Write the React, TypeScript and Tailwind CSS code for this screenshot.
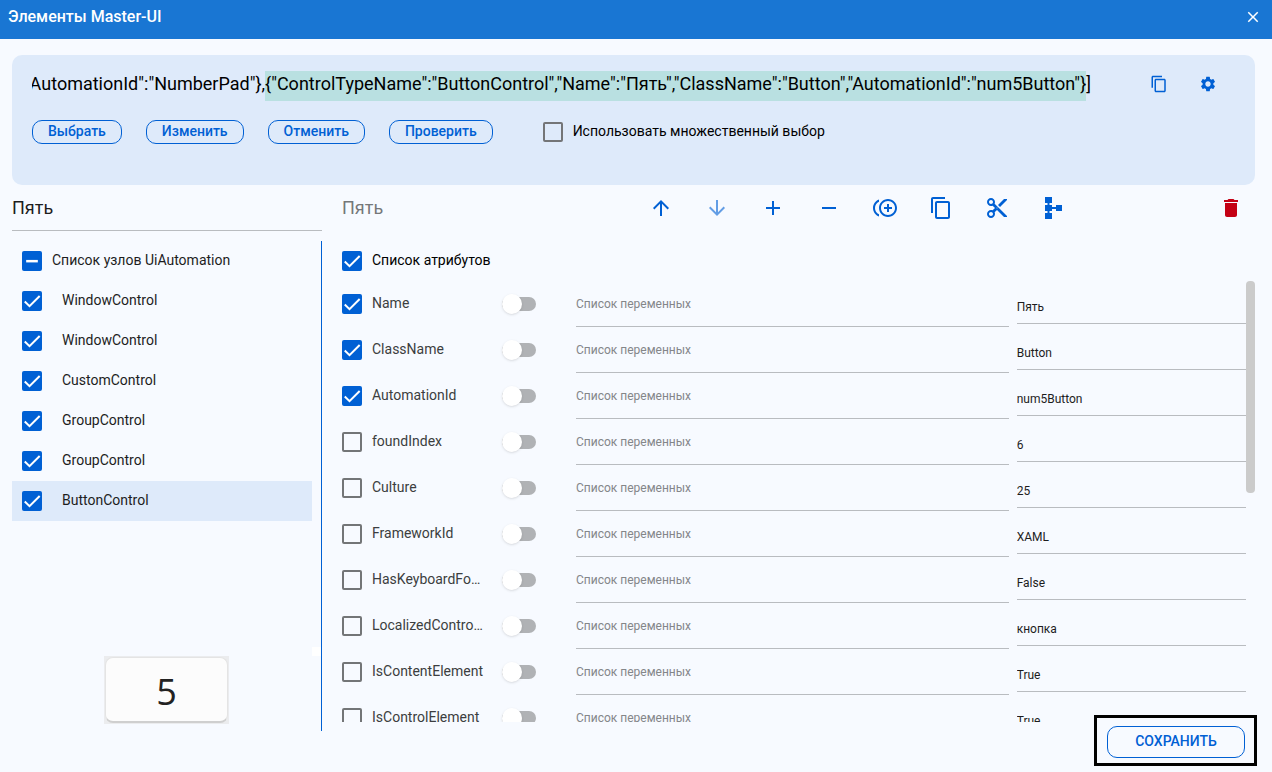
import { useState } from 'react';
import clsx from 'clsx';
import {
  MdAdd,
  MdArrowDownward,
  MdArrowUpward,
  MdClose,
  MdContentCopy,
  MdContentCut,
  MdControlPointDuplicate,
  MdDelete,
  MdRemove,
  MdSettings,
} from 'react-icons/md';

const nodes = [
  'WindowControl',
  'WindowControl',
  'CustomControl',
  'GroupControl',
  'GroupControl',
  'ButtonControl',
];

const attributes = [
  { name: 'Name', value: 'Пять', used: true },
  { name: 'ClassName', value: 'Button', used: true },
  { name: 'AutomationId', value: 'num5Button', used: true },
  { name: 'foundIndex', value: '6', used: false },
  { name: 'Culture', value: '25', used: false },
  { name: 'FrameworkId', value: 'XAML', used: false },
  { name: 'HasKeyboardFocus', value: 'False', used: false },
  { name: 'LocalizedControlType', value: 'кнопка', used: false },
  { name: 'IsContentElement', value: 'True', used: false },
  { name: 'IsControlElement', value: 'True', used: false },
];

const actions = ['Выбрать', 'Изменить', 'Отменить', 'Проверить'];

function TreeIcon() {
  return (
    <svg viewBox="0 0 24 24" className="size-6" fill="currentColor">
      <path d="M4 1h7v6H8.500v2H11v2h4V9h6v6h-6v-2h-4v2H8.500v2H11v6H4v-6h2.500v-2H4V9h2.500V7H4z" />
    </svg>
  );
}

const tools = [
  { label: 'Вверх', icon: <MdArrowUpward /> },
  { label: 'Вниз', icon: <MdArrowDownward />, disabled: true },
  { label: 'Добавить', icon: <MdAdd /> },
  { label: 'Убрать', icon: <MdRemove /> },
  { label: 'Дублировать', icon: <MdControlPointDuplicate /> },
  { label: 'Копировать', icon: <MdContentCopy /> },
  { label: 'Вырезать', icon: <MdContentCut /> },
  { label: 'Дерево', icon: <TreeIcon /> },
];

type CheckboxProps = {
  id: string;
  defaultChecked?: boolean;
  mixed?: boolean;
};

function Checkbox({ id, defaultChecked = false, mixed = false }: CheckboxProps) {
  const [checked, setChecked] = useState(defaultChecked);
  const filled = checked || mixed;

  return (
    <span className="grid size-5 shrink-0">
      <input
        id={id}
        type="checkbox"
        checked={checked}
        onChange={(e) => setChecked(e.target.checked)}
        className={clsx(
          'col-start-1 row-start-1 size-5 appearance-none rounded-xs',
          filled ? 'bg-[#0060d4]' : 'border-2 border-[#737577]',
        )}
      />
      {filled && (
        <svg
          viewBox="0 0 24 24"
          className="pointer-events-none col-start-1 row-start-1 size-5 fill-none stroke-white"
          strokeWidth={mixed ? 3 : 2.4}
        >
          <path d={mixed ? 'M5 12.200h14' : 'M3.300 12.700 9 18.200 21.200 6'} />
        </svg>
      )}
    </span>
  );
}

export default function App() {
  return (
    <div className="flex h-screen flex-col bg-[#f7faff] font-[Roboto,sans-serif] text-sm text-[#1d1d1d]">
      <header className="flex h-[39px] shrink-0 items-center justify-between bg-[#1976d3] pr-2 pb-[6px] pl-2 text-white">
        <h1 className="text-base font-medium">Элементы Master-UI</h1>
        <button type="button" aria-label="Закрыть" className="p-[2px] text-lg">
          <MdClose />
        </button>
      </header>

      <main className="flex min-h-0 flex-1 flex-col pt-4 pr-[17px] pl-3">
        <section className="rounded-[10px] bg-[#deeafa] px-5 pt-4 pb-[41px]">
          <div className="flex h-[30px] items-start">
            <div
              role="textbox"
              aria-label="Путь к элементу"
              className="mr-[55px] flex min-w-0 flex-1 justify-end overflow-hidden text-lg leading-[26px] whitespace-nowrap text-black"
            >
              <span>{'AutomationId":"NumberPad"},'}</span>
              <mark className="h-[30px] bg-[#b9e0e1] text-black">
                {'{"ControlTypeName":"ButtonControl","Name":"Пять","ClassName":"Button","AutomationId":"num5Button"}'}
              </mark>
              <span>]</span>
            </div>
            <div className="flex gap-[23px] pr-[14px] text-lg text-[#0060d4]">
              <button
                type="button"
                aria-label="Копировать путь"
                className="flex size-[26px] items-center justify-center"
              >
                <MdContentCopy />
              </button>
              <button
                type="button"
                aria-label="Настройки"
                className="flex size-[26px] items-center justify-center"
              >
                <MdSettings />
              </button>
            </div>
          </div>

          <div className="mt-[19px] flex h-6 items-center">
            <div className="flex gap-6">
              {actions.map((action) => (
                <button
                  key={action}
                  type="button"
                  className="h-6 rounded-[10px] border border-[#0060d4] px-[15px] pb-[2px] leading-5 font-medium text-[#0060d4]"
                >
                  {action}
                </button>
              ))}
            </div>
            <div className="ml-[50px] flex items-center gap-[10px]">
              <Checkbox id="multi" />
              <label htmlFor="multi" className="pb-[2px] text-black">
                Использовать множественный выбор
              </label>
            </div>
          </div>
        </section>

        <div className="flex min-h-0 flex-1">
          <aside className="flex w-[310px] shrink-0 flex-col pb-[41px]">
            <input
              aria-label="Имя элемента"
              defaultValue="Пять"
              className="h-[46px] w-full border-b border-[#b9bcc0] text-lg outline-none"
            />
            <div className="mt-[10px] flex min-h-0 flex-1 flex-col border-r border-[#0060d4]">
              <div className="min-h-0 flex-1 pr-[9px]">
                <div className="flex h-10 items-center gap-[10px] pl-[10px]">
                  <Checkbox id="nodes" mixed />
                  <label htmlFor="nodes" className="pb-[2px]">
                    Список узлов UiAutomation
                  </label>
                </div>
                <ul>
                  {nodes.map((node, i) => (
                    <li
                      key={i}
                      className={clsx(
                        'flex h-10 items-center gap-5 pl-[10px]',
                        i === nodes.length - 1 && 'bg-[#deeafa]',
                      )}
                    >
                      <Checkbox id={`node-${i}`} defaultChecked />
                      <label htmlFor={`node-${i}`} className="pb-[2px]">
                        {node}
                      </label>
                    </li>
                  ))}
                </ul>
              </div>
              <div className="size-[9px] self-end bg-white" />
              <div className="mb-[7px] flex h-[68px] w-[125px] items-center justify-center self-center bg-[#ebecee] p-px">
                <div className="flex size-full items-center justify-center rounded-lg border border-b-2 border-[#e4e4e4] border-b-[#cfcfcf] bg-[#fcfcfc] pt-1 font-['Open_Sans',sans-serif] text-4xl text-[#222]">
                  5
                </div>
              </div>
            </div>
          </aside>

          <section className="ml-5 flex min-w-0 flex-1 flex-col">
            <div className="flex h-[46px] shrink-0 items-center">
              <input
                aria-label="Выбранный узел"
                defaultValue="Пять"
                disabled
                className="w-[299px] min-w-0 text-lg text-[#757779]"
              />
              <div className="flex gap-4 text-2xl text-[#0060d4]">
                {tools.map((tool) => (
                  <button
                    key={tool.label}
                    type="button"
                    aria-label={tool.label}
                    disabled={tool.disabled}
                    className="flex size-10 items-center justify-center disabled:opacity-60"
                  >
                    {tool.icon}
                  </button>
                ))}
              </div>
              <button
                type="button"
                aria-label="Удалить"
                className="mr-1 ml-auto flex size-10 items-center justify-center text-2xl text-[#c40014]"
              >
                <MdDelete />
              </button>
            </div>

            <div className="mt-[10px] flex h-10 shrink-0 items-center gap-[10px]">
              <Checkbox id="attributes" defaultChecked />
              <label htmlFor="attributes" className="pb-[2px] text-black">
                Список атрибутов
              </label>
            </div>

            <div className="flex min-h-0 flex-1">
              <ul className="min-w-0 flex-1 overflow-hidden">
                {attributes.map((attr) => (
                  <li key={attr.name} className="flex h-[46px] items-center">
                    <Checkbox id={attr.name} defaultChecked={attr.used} />
                    <label
                      htmlFor={attr.name}
                      className="mr-[18px] ml-[10px] w-28 shrink-0 truncate pb-[2px] text-[#3c3e40]"
                    >
                      {attr.name}
                    </label>
                    <input
                      type="checkbox"
                      role="switch"
                      aria-label={`Переменная для ${attr.name}`}
                      className="relative mr-10 h-[14px] w-[34px] shrink-0 appearance-none rounded-full bg-[#b0b2b5] before:absolute before:-top-[3px] before:left-0 before:size-5 before:rounded-full before:bg-white before:shadow-sm checked:before:left-[14px]"
                    />
                    <select
                      aria-label={`Переменная ${attr.name}`}
                      className="mr-2 h-full min-w-0 flex-[432] appearance-none border-b border-[#b9bcc0] text-xs text-[#848689]"
                    >
                      <option>Список переменных</option>
                    </select>
                    <input
                      aria-label={`Значение ${attr.name}`}
                      defaultValue={attr.value}
                      className="mt-auto mb-[3px] h-[34px] min-w-0 flex-[229] border-b border-[#b9bcc0] text-xs outline-none"
                    />
                  </li>
                ))}
              </ul>
              <div className="w-[9px] shrink-0">
                <div className="h-[48%] rounded-sm bg-[#cbcbcb]" />
              </div>
            </div>

            <footer className="flex justify-end pt-1 pr-[10px] pb-[14px]">
              <div className="relative">
                <button
                  type="button"
                  className="h-8 w-[138px] rounded-[10px] border border-[#0060d4] pb-[2px] font-medium text-[#0060d4]"
                >
                  СОХРАНИТЬ
                </button>
                <span className="pointer-events-none absolute -top-[11px] -right-3 -bottom-2 -left-[13px] border-3 border-black" />
              </div>
            </footer>
          </section>
        </div>
      </main>
    </div>
  );
}
